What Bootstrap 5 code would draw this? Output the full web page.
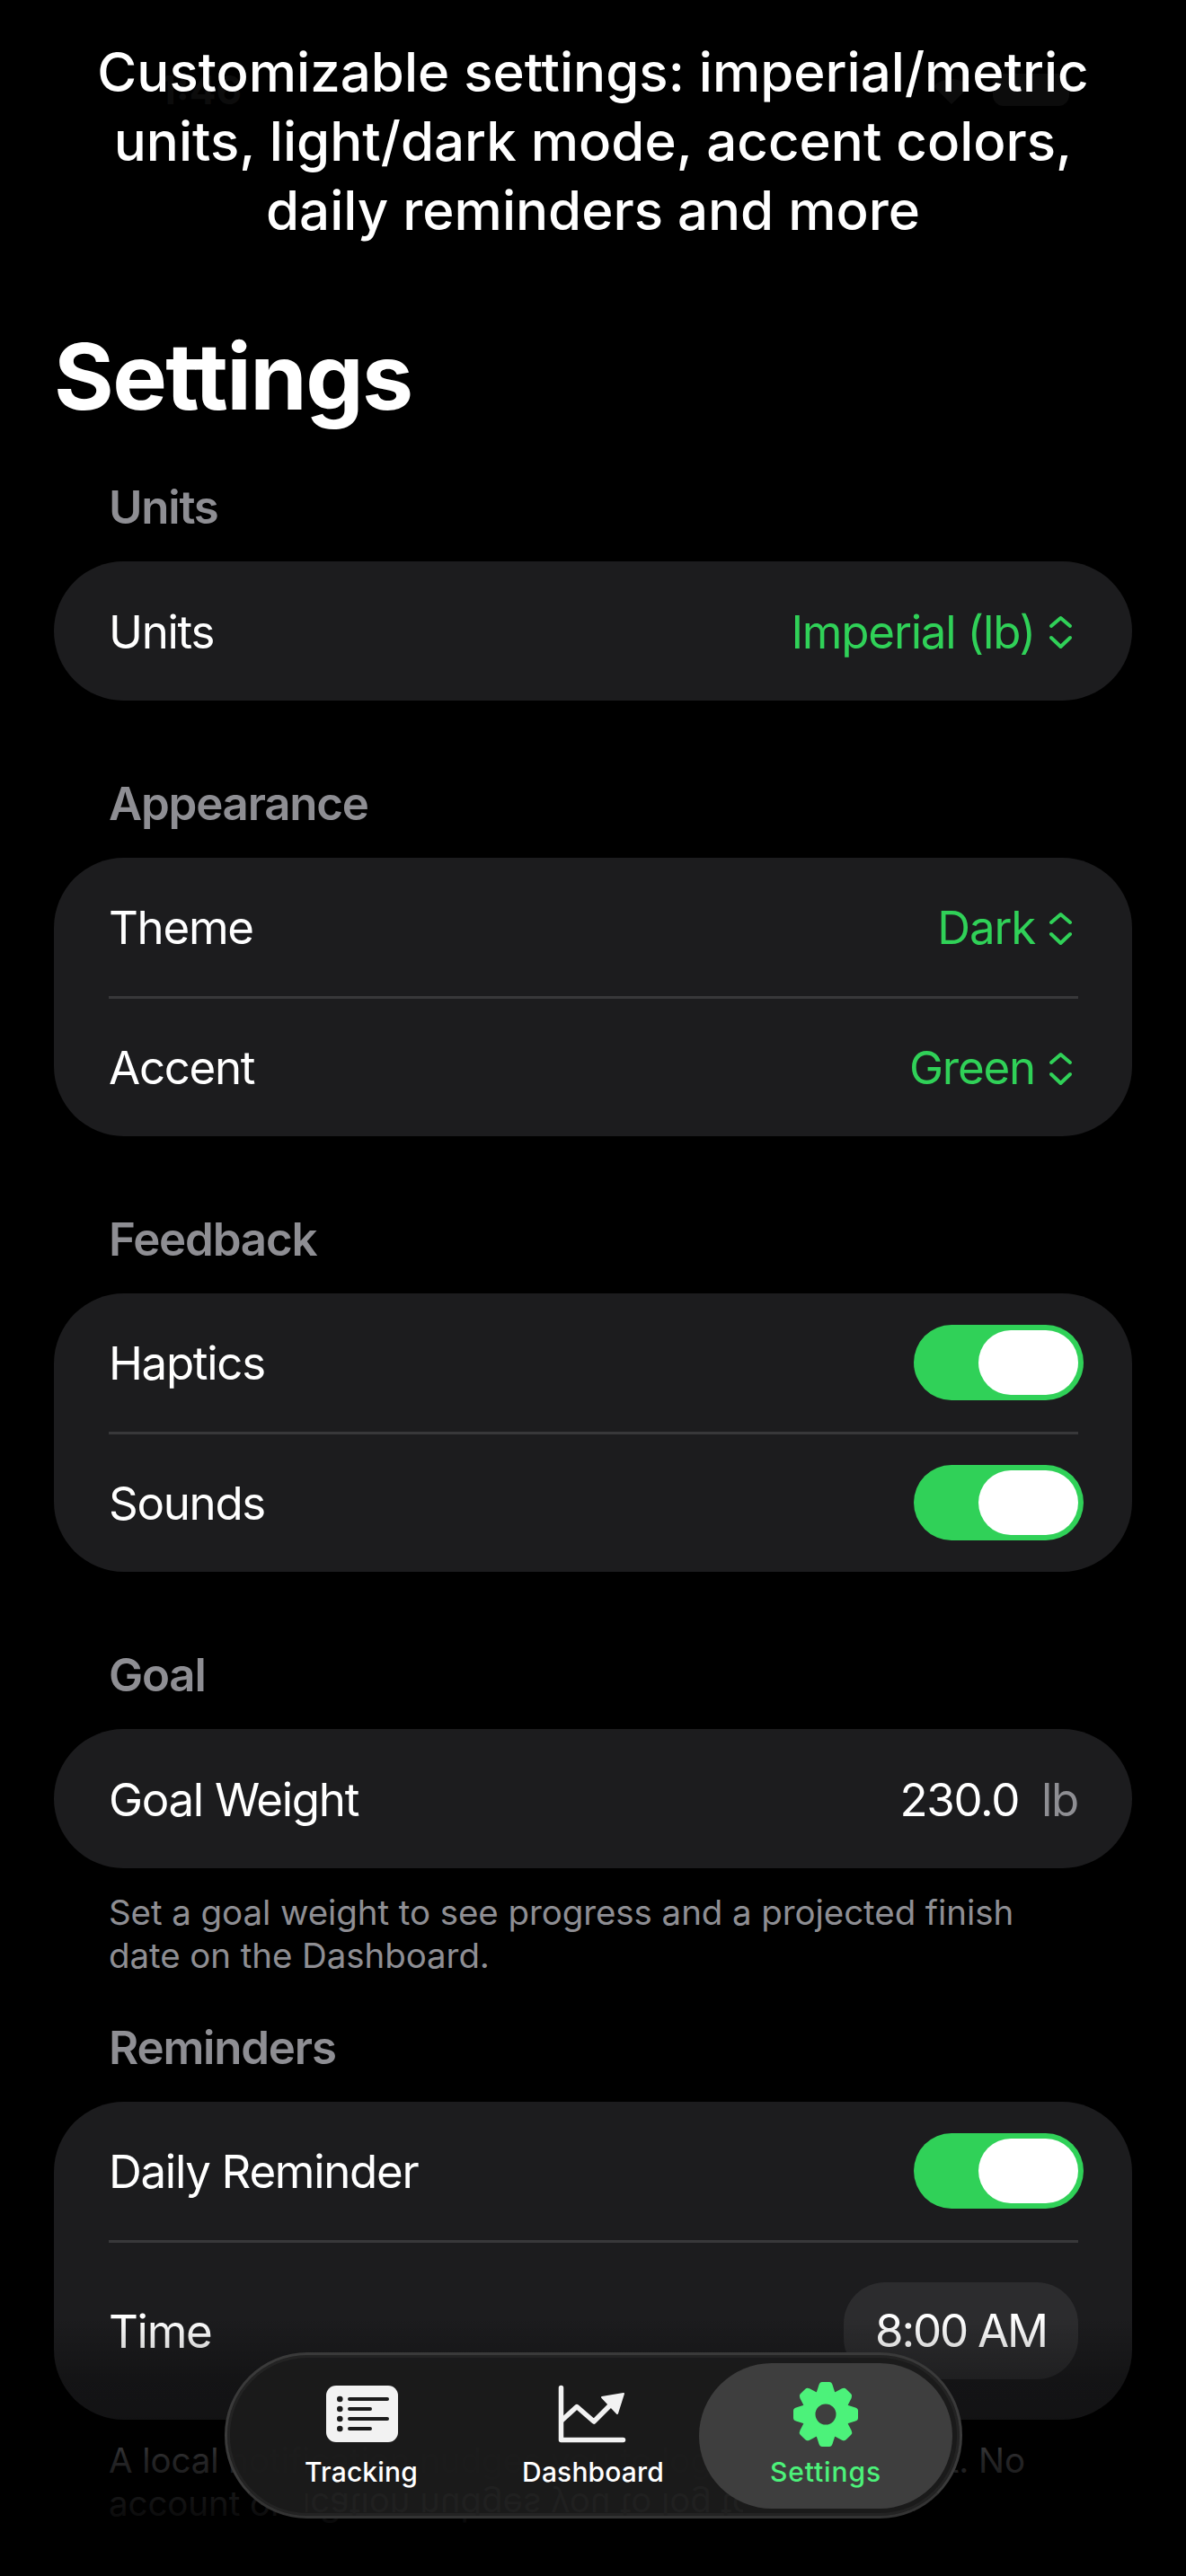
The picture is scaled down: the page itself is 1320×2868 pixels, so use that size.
<!DOCTYPE html>
<html lang="en">
<head>
<meta charset="utf-8">
<title>Settings</title>
<link rel="stylesheet" href="https://cdn.jsdelivr.net/npm/bootstrap@5.3.0/dist/css/bootstrap.min.css">
<style>
html,body{margin:0;background:#000;}
body{font-family:Inter,"Liberation Sans",sans-serif;color:#fff;}
.page-shell{position:relative;width:1320px;height:2868px;overflow:hidden;background:#000;}
.ghost-status{position:absolute;left:177px;right:130px;top:80px;height:40px;color:#0c0c0c;font-weight:700;font-size:44px;line-height:40px;}
.promo-caption{position:relative;font-family:Inter,sans-serif;font-weight:500;font-size:60px;line-height:77px;padding:42px 70px 0;text-align:center;letter-spacing:0;}
.screen-title{font-size:102px;font-weight:700;line-height:124px;letter-spacing:-1.6px;margin:84px 0 0 60px;}
.groups{padding:54px 60px 0;}
.group-title{font-size:51px;font-weight:600;line-height:60px;color:#8e8e93;letter-spacing:-1.2px;padding-left:61px;margin-bottom:30px;}
.set-group{margin-bottom:85px;}
.set-group.tight{margin-bottom:0;}
.set-card{background:#1c1c1e;border-radius:78px;}
.set-row{height:155px;padding:0 60px 0 61px;font-size:51px;letter-spacing:-1.3px;}
.set-row > span{margin-top:3px;}
.set-row:has(+ .set-row){height:154px;}
.set-row + .set-row{height:156px;position:relative;padding-top:2px;}
.set-row + .set-row::before{content:"";position:absolute;left:61px;right:60px;top:0;height:3px;background:#38383a;}
.set-row.tall{height:200px;}
.accent-text{color:#30d158;letter-spacing:-1.2px;}
.chev{margin-left:12px;width:36px;height:44px;}
.unit-muted{color:#8e8e93;margin-left:25px;}
.ios-toggle{width:189px;height:84px;border-radius:42px;background:#30d158;padding:6px;margin-right:-6px;}
.ios-knob{width:111px;height:72px;border-radius:36px;background:#fff;}
.time-chip{width:261px;height:108px;border-radius:46px;background:#2c2c2e;letter-spacing:-2.2px;}
.foot-note{font-size:38.5px;line-height:48px;color:#8e8e93;letter-spacing:-.08px;padding:0 60px 0 61px;}
.note-goal{margin:25px 0 49px;}
.note-local{margin-top:21px;}
.fade-bottom{position:absolute;left:0;right:0;top:2560px;bottom:0;background:linear-gradient(to bottom,rgba(0,0,0,0) 20px,rgba(0,0,0,.3) 90px,rgba(0,0,0,.33) 130px,rgba(0,0,0,.74) 178px,rgba(0,0,0,.88) 228px,#000 270px);}
.tab-dock{position:absolute;left:250px;top:2619px;width:821px;height:185px;border-radius:92px;background:rgba(27,27,27,.96);border:3px solid #3a3a3a;border-bottom-color:#333;padding:9px 8px 9px 20px;overflow:hidden;box-shadow:inset 0 0 0 3px #232323;}
.mirror-text{position:absolute;left:-132px;top:144px;white-space:nowrap;transform:scaleY(-1);font-size:38.5px;line-height:48px;color:#202020;letter-spacing:-.08px;clip-path:inset(0 calc(100% - 706px) 0 219px);}
.tab-cell{position:relative;width:258px;height:162px;padding-top:11px;color:#fff;font-size:30px;font-weight:500;line-height:40px;letter-spacing:.15px;}
.tab-cell.on{width:282px;margin-left:-11px;background:#3e3e3e;border-radius:81px;color:#4cf27a;letter-spacing:.9px;}
.tab-cell svg{display:block;margin-left:6px;}
.tab-cell.on svg{margin-left:0;}
</style>
</head>
<body>
<div class="page-shell">
  <div class="ghost-status d-flex align-items-center justify-content-between">
    <span>1:46</span>
    <div class="d-flex align-items-center gap-4">
      <svg width="44" height="32" viewBox="0 0 44 32"><path d="M2 12a29 29 0 0 1 40 0l-20 20z" fill="#0c0c0c"/></svg>
      <svg width="85" height="36" viewBox="0 0 85 36"><rect width="85" height="36" rx="12" fill="#0c0c0c"/></svg>
    </div>
  </div>
  <div class="promo-caption">Customizable settings: imperial/metric units, light/dark mode, accent colors, daily reminders and more</div>
  <h1 class="screen-title">Settings</h1>
  <div class="groups">
    <section class="set-group">
      <div class="group-title">Units</div>
      <div class="set-card">
        <div class="set-row d-flex align-items-center justify-content-between">
          <span>Units</span>
          <span class="d-flex align-items-center accent-text">Imperial (lb)<svg class="chev" viewBox="0 0 36 44" fill="none" stroke="#30d158" stroke-width="4" stroke-linecap="round" stroke-linejoin="round"><path d="M6 15l10.500-9L27 15M6 28l10.500 10L27 28"/></svg></span>
        </div>
      </div>
    </section>
    <section class="set-group">
      <div class="group-title">Appearance</div>
      <div class="set-card">
        <div class="set-row d-flex align-items-center justify-content-between">
          <span>Theme</span>
          <span class="d-flex align-items-center accent-text">Dark<svg class="chev" viewBox="0 0 36 44" fill="none" stroke="#30d158" stroke-width="4" stroke-linecap="round" stroke-linejoin="round"><path d="M6 15l10.500-9L27 15M6 28l10.500 10L27 28"/></svg></span>
        </div>
        <div class="set-row d-flex align-items-center justify-content-between">
          <span>Accent</span>
          <span class="d-flex align-items-center accent-text">Green<svg class="chev" viewBox="0 0 36 44" fill="none" stroke="#30d158" stroke-width="4" stroke-linecap="round" stroke-linejoin="round"><path d="M6 15l10.500-9L27 15M6 28l10.500 10L27 28"/></svg></span>
        </div>
      </div>
    </section>
    <section class="set-group">
      <div class="group-title">Feedback</div>
      <div class="set-card">
        <div class="set-row d-flex align-items-center justify-content-between">
          <span>Haptics</span>
          <div class="ios-toggle d-flex justify-content-end"><div class="ios-knob"></div></div>
        </div>
        <div class="set-row d-flex align-items-center justify-content-between">
          <span>Sounds</span>
          <div class="ios-toggle d-flex justify-content-end"><div class="ios-knob"></div></div>
        </div>
      </div>
    </section>
    <section class="set-group tight">
      <div class="group-title">Goal</div>
      <div class="set-card">
        <div class="set-row d-flex align-items-center justify-content-between">
          <span>Goal Weight</span>
          <span class="d-flex align-items-center"><span>230.0</span><span class="unit-muted">lb</span></span>
        </div>
      </div>
      <p class="foot-note note-goal">Set a goal weight to see progress and a projected finish date on the Dashboard.</p>
    </section>
    <section class="set-group tight">
      <div class="group-title">Reminders</div>
      <div class="set-card">
        <div class="set-row d-flex align-items-center justify-content-between">
          <span>Daily Reminder</span>
          <div class="ios-toggle d-flex justify-content-end"><div class="ios-knob"></div></div>
        </div>
        <div class="set-row tall d-flex align-items-center justify-content-between">
          <span>Time</span>
          <div class="time-chip d-flex align-items-center justify-content-center">8:00 AM</div>
        </div>
      </div>
      <p class="foot-note note-local">A local notification nudges you to log today's weight. No account or sign-in required.</p>
    </section>
  </div>
  <div class="fade-bottom"></div>
  <nav class="tab-dock d-flex align-items-start">
    <span class="mirror-text">A local notification nudges you to log today's weight.</span>
    <div class="tab-cell d-flex flex-column align-items-center">
      <svg width="110" height="90" viewBox="0 0 110 90"><rect x="13" y="14" width="80" height="63" rx="11" fill="#f2f2f2"/><g fill="#1b1b1b"><circle cx="28.300" cy="29" r="3.300"/><circle cx="28.300" cy="40" r="3.300"/><circle cx="28.300" cy="51" r="3.300"/><circle cx="28.300" cy="62" r="3.300"/></g><g stroke="#1b1b1b" stroke-width="4" stroke-linecap="round"><path d="M39 29h42M39 40h23M39 51h42M39 62h23"/></g></svg>
      <span>Tracking</span>
    </div>
    <div class="tab-cell d-flex flex-column align-items-center">
      <svg width="110" height="90" viewBox="0 0 110 90" fill="none" stroke="#f2f2f2" stroke-width="5.500" stroke-linecap="round" stroke-linejoin="round"><path d="M16.500 16.500V74.500H85.500"/><path d="M17 53L34 37.500L53 54L72 35"/><path d="M62 27L86 23L79 45Z" fill="#f2f2f2" stroke-width="2"/></svg>
      <span>Dashboard</span>
    </div>
    <div class="tab-cell on d-flex flex-column align-items-center">
      <svg width="110" height="90" viewBox="0 0 110 90"><g transform="translate(55 46)" fill="#4cf27a"><circle r="19" fill="none" stroke="#4cf27a" stroke-width="15"/><path d="M-11 -22L-7.500 -33Q-6.500 -36 -4 -36H4Q6.500 -36 7.500 -33L11 -22Z"/><path transform="rotate(45)" d="M-11 -22L-7.500 -33Q-6.500 -36 -4 -36H4Q6.500 -36 7.500 -33L11 -22Z"/><path transform="rotate(90)" d="M-11 -22L-7.500 -33Q-6.500 -36 -4 -36H4Q6.500 -36 7.500 -33L11 -22Z"/><path transform="rotate(135)" d="M-11 -22L-7.500 -33Q-6.500 -36 -4 -36H4Q6.500 -36 7.500 -33L11 -22Z"/><path transform="rotate(180)" d="M-11 -22L-7.500 -33Q-6.500 -36 -4 -36H4Q6.500 -36 7.500 -33L11 -22Z"/><path transform="rotate(225)" d="M-11 -22L-7.500 -33Q-6.500 -36 -4 -36H4Q6.500 -36 7.500 -33L11 -22Z"/><path transform="rotate(270)" d="M-11 -22L-7.500 -33Q-6.500 -36 -4 -36H4Q6.500 -36 7.500 -33L11 -22Z"/><path transform="rotate(315)" d="M-11 -22L-7.500 -33Q-6.500 -36 -4 -36H4Q6.500 -36 7.500 -33L11 -22Z"/></g></svg>
      <span>Settings</span>
    </div>
  </nav>
</div>
<script src="https://cdn.jsdelivr.net/npm/bootstrap@5.3.0/dist/js/bootstrap.bundle.min.js"></script>
</body>
</html>
